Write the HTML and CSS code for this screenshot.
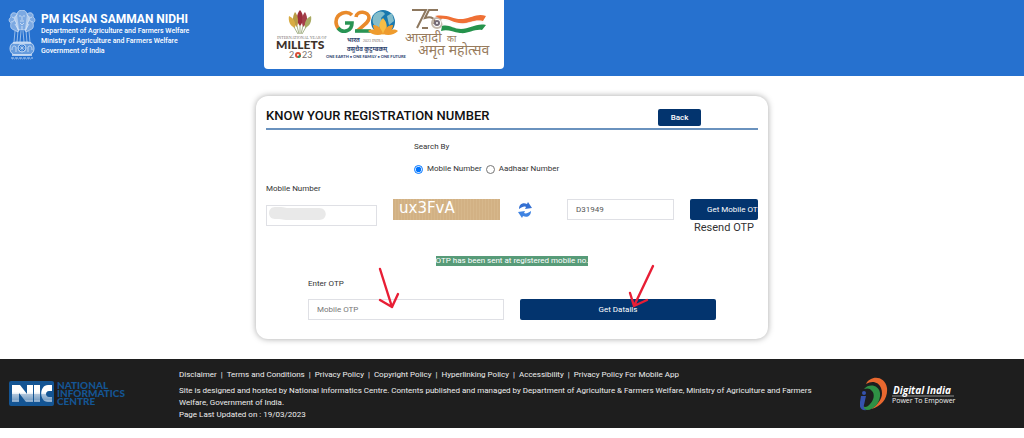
FILE: index.html
```html
<!DOCTYPE html>
<html lang="en">
<head>
  <meta charset="UTF-8">
  <meta name="viewport" content="width=device-width, initial-scale=1.0">
  <title>PM Kisan Samman Nidhi</title>
  <link rel="stylesheet" href="styles.css">
</head>
<body>
  <header class="header">
    <div class="brand">
      <svg class="emblem" viewBox="0 0 28 50" fill="none" stroke="#d5e4f7" stroke-width=".8" role="img" aria-label="State Emblem of India">
        <g fill="#fff" fill-opacity=".4" stroke-opacity=".85">
          <path d="M9 5c0-3 2-5 5-5s5 2 5 5c3 1 3 5 1 7l-2 8h-8l-2-8c-2-2-2-6 1-7z"/>
          <path d="M9 4c-4-3-7 0-6 3-3 2-2 5 0 6-1 4 0 6 3 7l4 2 1-3"/>
          <path d="M19 4c4-3 7 0 6 3 3 2 2 5 0 6 1 4 0 6-3 7l-4 2-1-3"/>
        </g>
        <path d="M11 6h2m2 0h2M14 6v4m-2 1h4M12 13l2 2 2-2M4 7l2 1M3 12c2 0 3-1 3-2m18-3l-2 1m3 4c-2 0-3-1-3-2M7 14l3 5m11-5l-3 5M14 16v4"/>
        <path stroke-opacity=".8" d="M7 21l-1 11m4-11l-1 11m4-11l-1 11m3-11l1 11m2-11l1 11m2-11l1 11"/>
        <rect x="2" y="32" width="24" height="13" rx="6" fill="#fff" fill-opacity=".3"/>
        <path stroke-width="1.4" d="M5 33h18M4 45h20"/>
        <circle cx="14" cy="38" r="4" fill="#2671cf"/>
        <path d="M14 34v8M10 38h8M11 35l6 6M17 35l-6 6" stroke-width=".6"/>
        <path d="M4 40c0-4 2-5 4-3v5m16-2c0-4-2-5-4-3v5"/>
        <path stroke-dasharray="3 1" d="M3 48h22"/>
        <path stroke-opacity=".6" stroke-dasharray="1 1" d="M4 49h20"/>
      </svg>
      <div class="brand-text">
        <h1>PM KISAN SAMMAN NIDHI</h1>
        <p>Department of Agriculture and Farmers Welfare</p>
        <p>Ministry of Agriculture and Farmers Welfare</p>
        <p>Government of India</p>
      </div>
    </div>

    <div class="partners">
      <svg viewBox="0 0 240 69" role="img" aria-label="International Year of Millets 2023, G20 India, Azadi Ka Amrit Mahotsav">
        <!-- millets -->
        <g transform="translate(36 0)">
          <path fill="#9b2d3c" d="M0 10c4 4 4 12 0 16c-4-4-4-12 0-16z"/>
          <path fill="#b99b45" d="M-5 12c3 3 4 10 2 15c-5-4-5-10-2-15z"/>
          <path fill="#a33e49" d="M5 12c-3 3-4 10-2 15c5-4 5-10 2-15z"/>
          <path fill="#d8ab43" d="M-11 16c5 2 7 7 6 12c-5-2-7-7-6-12z"/>
          <path fill="#a9ab62" d="M11 16c-5 2-7 7-6 12c5-2 7-7 6-12z"/>
          <path fill="none" stroke="#8f9f6b" stroke-width=".8" d="M0 25v9M-3 26l2 8M3 26l-2 8M-6 27l4 7M6 27l-4 7"/>
        </g>
        <text class="tiny-serif" x="13" y="39" font-size="4">INTERNATIONAL YEAR OF</text>
        <text x="12" y="49" font-family="Lato" font-size="12" font-weight="900" fill="#3d322b">MILLETS</text>
        <text x="25" y="58" font-family="Lato" font-size="9" fill="#77706c">2</text>
        <circle cx="34" cy="55" r="2" fill="none" stroke="#d94e36" stroke-width="2"/>
        <path d="M34 57a2 2 0 0 0 2-2" fill="none" stroke="#239a67" stroke-width="2"/>
        <text x="38" y="58" font-family="Lato" font-size="9" fill="#77706c">23</text>

        <!-- G20 -->
        <g fill="none" stroke-width="3.6">
          <path stroke="#e98a2b" d="M88 15c-5-5-16-2-16 7c0 3 1 5 3 7"/>
          <path stroke="#299454" d="M74 28c5 6 14 3 14-5h-7"/>
          <path stroke="#e98a2b" d="M92 17c1-7 13-6 13 1c0 4-5 7-12 13"/>
          <path stroke="#299454" d="M91 31h16"/>
        </g>
        <circle cx="119" cy="22" r="12" fill="#1878ae"/>
        <path d="M110 15c3-4 9-5 11-1l-4 4 2 5-5 5c-5-2-7-8-4-13zM123 16l5-3 2 8-5 4z" fill="#83bdcb"/>
        <path d="M119 18c5 5 5 12 0 17c-5-5-5-12 0-17z" fill="#f7bd45"/>
        <path d="M119 34c-2-7-6-9-10-9c0 5 4 9 10 9zM119 34c2-7 6-9 10-9c0 5-4 9-10 9zM119 34c-5-4-11-6-15-3c4 4 10 5 15 3zM119 34c5-4 11-6 15-3c-4 4-10 5-15 3z" fill="#ee9b2d"/>
        <text x="83" y="42" class="hindi" font-size="6" font-weight="700" fill="#30456f">भारत</text>
        <text class="tiny-serif" x="99" y="42" font-size="4">2023 INDIA</text>
        <text x="83" y="51" class="hindi" font-size="6" font-weight="700" fill="#30456f">वसुधैव कुटुम्बकम्</text>
        <text x="62" y="58" font-family="Lato" font-size="4" font-weight="900" fill="#354c79">ONE EARTH • ONE FAMILY • ONE FUTURE</text>

        <!-- 75 years -->
        <g fill="none" stroke="#8d775e" stroke-width="2">
          <path d="M148 10h14l-9 18M174 10h-9l-4 8c7-2 11 1 9 6M158 28h6"/>
          <circle cx="173" cy="23" r="5" stroke="#c2b6ab"/>
          <circle cx="173" cy="23" r="2" stroke="#756c7a"/>
        </g>
        <path fill="#ef7035" d="M171 16c14-2 18 4 28 3 9-1 14-6 23-3l-3 5c-10-2-14 4-24 2-8-1-11-5-18-4z"/>
        <path fill="#fff" stroke="#eee" stroke-width=".5" d="M177 20c7-1 11 4 19 4 9 0 14-5 23-2l-2 4c-9-1-13 4-21 3-7-1-10-4-17-4z"/>
        <path fill="#25934c" d="M178 26c7-2 11 3 19 3 9 0 15-6 25-4l-4 5c-9-1-13 4-22 3-8-1-12-4-19-2z"/>
        <text x="141" y="42" class="hindi" font-size="13" fill="#987b5c">आज़ादी</text>
        <text x="183" y="42" class="hindi" font-size="9" fill="#987b5c">का</text>
        <text x="154" y="55" class="hindi" font-size="14" fill="#987b5c">अमृत महोत्सव</text>
      </svg>
    </div>
  </header>

  <main>
    <form class="card" onsubmit="return false">
      <div class="card-head">
        <h2>KNOW YOUR REGISTRATION NUMBER</h2>
        <button type="button" class="btn btn-back">Back</button>
      </div>

      <fieldset class="search-by">
        <legend>Search By</legend>
        <div class="options">
          <input type="radio" name="searchBy" id="byMobile" checked>
          <label for="byMobile">Mobile Number</label>
          <input type="radio" name="searchBy" id="byAadhaar">
          <label for="byAadhaar">Aadhaar Number</label>
        </div>
      </fieldset>

      <label class="mobile-label" for="mobile">Mobile Number</label>
      <div class="captcha-row">
        <div class="mobile-field">
          <input type="text" id="mobile" class="field">
          <svg class="masked" viewBox="0 0 58 14" aria-hidden="true">
            <path fill="#e9e9e9" d="M6 0h6c3 0 4 1 6 1h32c9 0 9 12 0 12H17c-3 0-4-1-7-1H6C-2 12-2 0 6 0z"/>
          </svg>
        </div>
        <div class="captcha">ux3FvA</div>
        <button type="button" class="refresh" aria-label="Refresh captcha">
          <svg viewBox="0 0 14 16">
            <path fill="#3470d2" d="M1 7C1 2 5 0 9 2l1-2 4 6-7 1 1-2C6 4 4 5 1 7z"/>
            <path fill="#3f83e2" d="M13 9c0 5-4 7-8 5l-1 2-4-6 7-1-1 2c2 1 4 0 7-2z"/>
          </svg>
        </button>
        <input type="text" class="field" value="D31949" aria-label="Captcha">
        <div class="otp-request">
          <button type="button" class="btn btn-otp">Get Mobile OTP</button>
          <a href="#">Resend OTP</a>
        </div>
      </div>

      <p class="message"><span>OTP has been sent at registered mobile no.</span></p>

      <div class="otp-row">
        <div class="otp-field">
          <label for="otp">Enter OTP</label>
          <input type="text" id="otp" class="field" placeholder="Mobile OTP">
          <svg class="arrow arrow-otp" viewBox="0 0 24 44" aria-hidden="true"><path d="M4 3l12 38M4 34l12 7 6-13"/></svg>
        </div>
        <div class="otp-submit">
          <button type="submit" class="btn">Get Datails</button>
          <svg class="arrow arrow-submit" viewBox="0 0 30 46" aria-hidden="true"><path d="M26 3L7 43M3 30l4 13 13-6"/></svg>
        </div>
      </div>
    </form>
  </main>

  <footer class="footer">
    <svg class="nic" viewBox="0 0 118 26" role="img" aria-label="National Informatics Centre">
      <defs>
        <linearGradient id="nicFill" x2="0" y2="1">
          <stop offset=".4" stop-color="#fff"/>
          <stop offset="1" stop-color="#85a8cb"/>
        </linearGradient>
      </defs>
      <rect width="45" height="25" rx="2" fill="#145594"/>
      <path fill="url(#nicFill)" d="M3 4h8l7 9V4h6v17h-7l-7-9v9H3zM25 4h6v17h-6zM43 4v6h-3c-4 0-4 6 0 6h3v5h-4c-9 0-9-17 0-17z"/>
      <path stroke="#145594" stroke-width=".5" d="M1 14h43M1 16h43M1 18h43"/>
      <g font-family="Lato" font-size="10" font-weight="900" fill="#145594">
        <text x="48" y="8">NATIONAL</text>
        <text x="48" y="16">INFORMATICS</text>
        <text x="48" y="24">CENTRE</text>
      </g>
    </svg>
    <div class="footer-text">
      <nav>
        <a href="#">Disclaimer</a>
        <a href="#">Terms and Conditions</a>
        <a href="#">Privacy Policy</a>
        <a href="#">Copyright Policy</a>
        <a href="#">Hyperlinking Policy</a>
        <a href="#">Accessibility</a>
        <a href="#">Privacy Policy For Mobile App</a>
      </nav>
      <p>Site is designed and hosted by National Informatics Centre. Contents published and managed by Department of Agriculture &amp; Farmers Welfare, Ministry of Agriculture and Farmers Welfare, Government of India.</p>
      <p>Page Last Updated on : 19/03/2023</p>
    </div>
    <svg class="digital" viewBox="0 0 96 34" role="img" aria-label="Digital India, Power To Empower">
      <path fill="#e9682f" d="M6 7C10-2 25-2 27 11c1 10-5 18-16 21C20 26 24 19 21 11 19 5 12 3 6 7z"/>
      <path fill="#2f9145" d="M4 12c5-6 15-4 16 4 1 9-6 17-13 17-4 0-6-3-5-6 1 4 5 4 8 0 4-4 5-10 2-13-2-3-5-3-8-2z"/>
      <path fill="#3552ad" d="M1 19h5L4 28c-1 3 1 5 3 5-6 1-8-3-7-8z"/>
      <circle cx="4" cy="16" r="2" fill="#3552ad"/>
      <text x="33" y="17" font-family="Open Sans" font-size="10" font-weight="700" font-style="italic" fill="#fff">Digital India</text>
      <path stroke="#ddd" stroke-width=".6" d="M32 19h62"/>
      <text x="32" y="26" font-family="Open Sans" font-size="7" fill="#eee">Power To Empower</text>
    </svg>
  </footer>
</body>
</html>
```
FILE: styles.css
```css
:root {
  --header-blue: #2671cf;
  --button-blue: #03346e;
  --line-blue: #6a92be;
  --text-color: #333;
  --border-color: #dfe0e5;
  --footer-bg: #1e1e1e;
  --arrow-red: #e81e35;
}

* {
  box-sizing: border-box;
}

body {
  margin: 0;
  background: #fff;
  color: var(--text-color);
  font-family: Roboto, "Noto Sans", sans-serif;
  font-size: 8px;
  line-height: 10px;
}

h1, h2, p {
  margin: 0;
}

a {
  color: inherit;
  text-decoration: none;
}

svg {
  display: block;
}

input, button {
  font: inherit;
}

/* header */
.header {
  display: flex;
  align-items: flex-start;
  gap: 8px;
  height: 76px;
  background: var(--header-blue);
  color: #fff;
}

.brand {
  flex: 0 0 25%;
  display: flex;
  gap: 5px;
  padding: 10px 0 0 8px;
  font-size: 7px;
  font-weight: 500;
}

.emblem {
  width: 28px;
  height: 50px;
}

.brand-text {
  padding-top: 2px;
}

.brand h1 {
  font-size: 12px;
  line-height: 14px;
  font-weight: 700;
}

.partners {
  width: 240px;
  background: #fff;
  border-radius: 0 0 4px 4px;
}

.hindi {
  font-family: "Noto Sans", "Noto Sans Devanagari", sans-serif;
}

.tiny-serif {
  font-family: "Liberation Serif", serif;
  fill: #77706c;
}

/* registration card */
.card {
  width: 50%;
  min-width: 480px;
  margin: 20px auto;
  padding: 10px;
  border-radius: 12px;
  box-shadow: 0 0 6px rgba(0, 0, 0, 0.35);
}

.card-head {
  display: flex;
  justify-content: space-between;
  align-items: flex-end;
  height: 24px;
  padding-right: 57px;
  padding-bottom: 2px;
  border-bottom: 2px solid var(--line-blue);
}

.card h2 {
  color: #111;
  font-size: 13px;
  line-height: 20px;
  font-weight: 500;
}

.btn {
  height: 21px;
  padding: 0;
  border: 0;
  border-radius: 2px;
  background: var(--button-blue);
  color: #fff;
  cursor: pointer;
}

.btn-back {
  flex: 0 0 43px;
  height: 17px;
  font-weight: 500;
}

.search-by {
  margin: 12px 0 0 148px;
  padding: 0;
  border: 0;
}

.search-by legend {
  padding: 0;
}

.options {
  display: flex;
  align-items: center;
  gap: 4px;
  padding-top: 12px;
}

.options input {
  width: 9px;
  height: 9px;
  margin: 0;
}

.mobile-label {
  display: block;
  margin-top: 10px;
}

.captcha-row {
  display: grid;
  grid-template-columns: 111fr 107fr 35fr 107fr 68fr;
  gap: 16px;
  align-items: start;
  padding-top: 5px;
}

.field {
  width: 100%;
  height: 21px;
  padding: 0 8px;
  border: 1px solid var(--border-color);
  background: #fff;
  color: #555;
}

.field::placeholder {
  color: #777;
}

.mobile-field {
  position: relative;
  padding-top: 6px;
}

.masked {
  position: absolute;
  left: 3px;
  top: 8px;
  width: 58px;
}

.captcha {
  height: 21px;
  padding-left: 6px;
  background: repeating-linear-gradient(90deg, #d2b184 0 2px, #d6b78b 2px 3px);
  color: #fff;
  font-family: "DejaVu Sans", sans-serif;
  font-size: 15px;
  line-height: 18px;
}

.refresh {
  width: 14px;
  margin: 3px 0 0 2px;
  padding: 0;
  border: 0;
  background: none;
}

.otp-request {
  min-width: 0;
}

.btn-otp {
  display: block;
  width: 100%;
  padding-left: 17px;
  overflow: hidden;
  text-align: left;
  white-space: nowrap;
}

.otp-request a {
  display: block;
  padding-left: 4px;
  font-size: 11px;
  line-height: 16px;
  white-space: nowrap;
}

.message {
  margin-top: 20px;
  text-align: center;
}

.message span {
  display: inline-block;
  background: #579b78;
  color: #fff;
}

.otp-row {
  display: grid;
  grid-template-columns: 1fr 1fr;
  gap: 16px;
  align-items: end;
  padding: 13px 42px 9px;
}

.otp-field,
.otp-submit {
  position: relative;
}

.otp-field label {
  display: block;
  margin-bottom: 10px;
}

.otp-submit .btn {
  display: block;
  width: 100%;
}

.arrow {
  position: absolute;
  fill: none;
  stroke: var(--arrow-red);
  stroke-width: 2.4;
  stroke-linecap: round;
  stroke-linejoin: round;
}

.arrow-otp {
  left: 68px;
  bottom: 10px;
  width: 24px;
}

.arrow-submit {
  left: 107px;
  bottom: 11px;
  width: 30px;
}

/* footer */
.footer {
  display: flex;
  align-items: flex-start;
  padding: 10px 68px 7px 9px;
  background: var(--footer-bg);
  color: #eee;
  line-height: 12px;
}

.nic {
  flex: 0 0 118px;
  margin: 12px 52px 0 0;
}

.footer-text {
  flex: 1;
}

.footer nav {
  display: flex;
  margin-bottom: 4px;
}

.footer nav a + a::before {
  content: "|";
  margin: 0 4px;
}

.digital {
  flex: 0 0 96px;
  margin: 8px 0 0 32px;
}
```
